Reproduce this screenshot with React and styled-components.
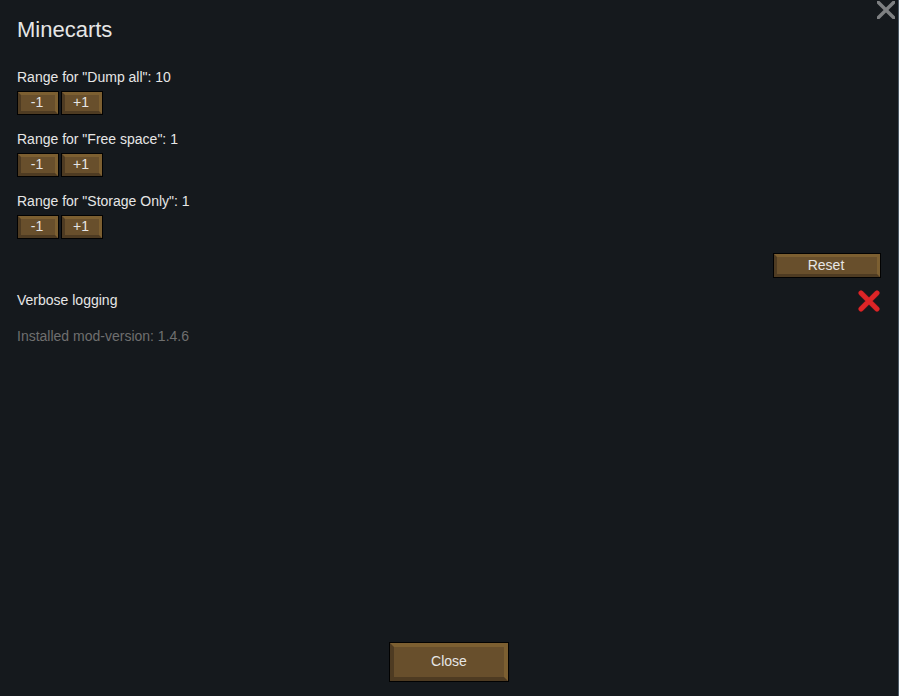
import React, { useState } from "react";
import styled, { createGlobalStyle } from "styled-components";

const GlobalStyle = createGlobalStyle`
  *, *::before, *::after { box-sizing: border-box; }
  body {
    margin: 0;
    background: #15191d;
    color: #e6e6e6;
    font-family: "Liberation Sans", Arial, sans-serif;
    font-size: 14px;
    line-height: 20px;
  }
`;

const Window = styled.main`
  position: relative;
  display: flex;
  flex-direction: column;
  min-height: 100vh;
  padding: 16px 17px 14px;
  border-right: 1px solid #4c5a66;
`;

const Title = styled.h1`
  margin: 0 0 23px;
  font-size: 22px;
  font-weight: 400;
  line-height: 28px;
`;

const DismissButton = styled.button`
  position: absolute;
  top: 0;
  right: 2px;
  width: 20px;
  height: 20px;
  padding: 0;
  border: 0;
  background: none;
  cursor: pointer;
  svg { display: block; }
`;

const Setting = styled.section`
  display: flex;
  flex-direction: column;
  gap: 5px;
  margin-bottom: 15px;
`;

const Label = styled.p`
  margin: 0;
`;

const Steps = styled.div`
  display: flex;
  gap: 4px;
  padding: 0 1px;
`;

const sizes = {
  step: { width: 40, height: 22, bevel: 3, padding: "0 2px 2px 0" },
  wide: { width: 106, height: 23, bevel: 3, padding: "0 2px 2px 0" },
  large: { width: 118, height: 38, bevel: 4, padding: "0 0 2px 0" },
};

const BevelButton = styled.button`
  display: flex;
  align-items: center;
  justify-content: center;
  width: ${({ $size }) => sizes[$size].width}px;
  height: ${({ $size }) => sizes[$size].height}px;
  padding: ${({ $size }) => sizes[$size].padding};
  border-style: solid;
  border-width: ${({ $size }) => sizes[$size].bevel}px;
  border-color: #7c5f31 #7c5f31 #4e3b22 #4e3b22;
  background: #684f2c;
  box-shadow: 0 0 0 1px #020202;
  color: #e6e6e6;
  font: inherit;
  line-height: 16px;
  cursor: pointer;
  &:hover { background: #755a34; }
`;

const ResetRow = styled.div`
  display: flex;
  justify-content: flex-end;
  padding: 1px 1px 0 0;
`;

const CheckRow = styled.label`
  display: flex;
  align-items: center;
  justify-content: space-between;
  margin-top: 11px;
  cursor: pointer;
`;

const CheckBox = styled.span`
  position: relative;
  width: 24px;
  height: 24px;
  svg { display: block; }
`;

const CheckInput = styled.input`
  position: absolute;
  inset: 0;
  width: 24px;
  height: 24px;
  margin: 0;
  opacity: 0;
  cursor: pointer;
`;

const Version = styled.p`
  margin: 14px 0 0;
  color: #6f6f6f;
`;

const Footer = styled.footer`
  display: flex;
  justify-content: center;
  margin-top: auto;
  padding-bottom: 1px;
`;

function CloseIcon() {
  return (
    <svg width="20" height="20" viewBox="0 0 20 20" aria-hidden="true">
      <path
        d="M1 1 H3.4 L10 7.6 L16.6 1 H19 V3.4 L12.4 10 L19 16.6 V19 H16.6 L10 12.4 L3.4 19 H1 V16.6 L7.6 10 L1 3.4 Z"
        fill="#7e8082"
      />
    </svg>
  );
}

function StateIcon({ on }) {
  return (
    <svg width="24" height="24" viewBox="0 0 24 24" fill="none" strokeLinecap="round" aria-hidden="true">
      {on ? (
        <path d="M4 14 L9 20 L20 6" stroke="#35b53a" strokeWidth="4" />
      ) : (
        <>
          <path d="M4 5 L20 21 M20 5 L4 21" stroke="#74191d" strokeWidth="5.4" />
          <path d="M4 5 L20 21 M20 5 L4 21" stroke="#dd2527" strokeWidth="4.6" />
        </>
      )}
    </svg>
  );
}

const defaults = { "Dump all": 10, "Free space": 1, "Storage Only": 1 };

export default function App() {
  const [ranges, setRanges] = useState(defaults);
  const [verbose, setVerbose] = useState(false);

  const step = (name, amount) =>
    setRanges((old) => ({ ...old, [name]: Math.max(0, old[name] + amount) }));

  return (
    <>
      <GlobalStyle />
      <Window>
        <DismissButton type="button" aria-label="Dismiss">
          <CloseIcon />
        </DismissButton>
        <Title>Minecarts</Title>
        {Object.entries(ranges).map(([name, value]) => (
          <Setting key={name}>
            <Label>{`Range for "${name}": ${value}`}</Label>
            <Steps role="group" aria-label={`Range for ${name}`}>
              <BevelButton type="button" $size="step" onClick={() => step(name, -1)}>-1</BevelButton>
              <BevelButton type="button" $size="step" onClick={() => step(name, 1)}>+1</BevelButton>
            </Steps>
          </Setting>
        ))}
        <ResetRow>
          <BevelButton type="button" $size="wide" onClick={() => setRanges(defaults)}>Reset</BevelButton>
        </ResetRow>
        <CheckRow>
          Verbose logging
          <CheckBox>
            <CheckInput type="checkbox" checked={verbose} onChange={(e) => setVerbose(e.target.checked)} />
            <StateIcon on={verbose} />
          </CheckBox>
        </CheckRow>
        <Version>Installed mod-version: 1.4.6</Version>
        <Footer>
          <BevelButton type="button" $size="large">Close</BevelButton>
        </Footer>
      </Window>
    </>
  );
}
